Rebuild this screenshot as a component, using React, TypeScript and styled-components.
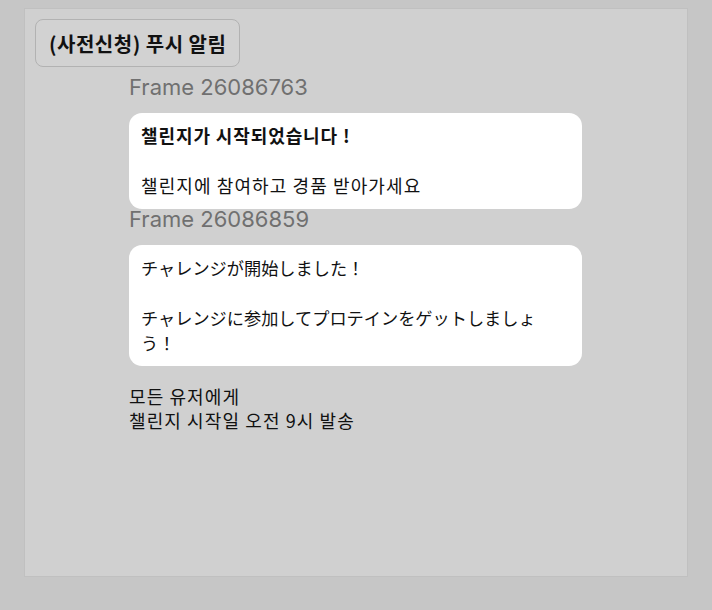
import styled, { createGlobalStyle } from "styled-components";

const GlobalStyle = createGlobalStyle`
  html, body {
    margin: 0;
    padding: 0;
    background: #c6c6c6;
  }
  body {
    padding: 8px 0 0;
    font-family: "Noto Sans CJK KR", "Noto Sans", sans-serif;
    color: #111;
  }
`;

const Panel = styled.div`
  box-sizing: border-box;
  width: 664px;
  height: 569px;
  margin: 0 auto;
  padding: 10px;
  background: #d0d0d0;
  border: 1px solid #c0c0c0;
  display: flex;
  flex-direction: column;
  align-items: flex-start;
`;

const PushButton = styled.button`
  box-sizing: border-box;
  height: 48px;
  padding: 0 13px;
  border: 1px solid #b2b2b2;
  border-radius: 8px;
  background: #d2d2d2;
  font-family: "Noto Sans CJK KR", sans-serif;
  font-size: 20px;
  font-weight: 700;
  color: #111;
  letter-spacing: 0.5px;
`;

const Frames = styled.div`
  display: flex;
  flex-direction: column;
  margin: 8px 0 0 94px;
`;

const FrameLabel = styled.div<{ $first?: boolean }>`
  font-family: Inter, "Liberation Sans", sans-serif;
  font-size: 22px;
  line-height: 24px;
  color: #707070;
  margin: ${(p) => (p.$first ? "0" : "-2px")} 0 14px;
`;

const Bubble = styled.div<{ $lang: "ko" | "ja" }>`
  box-sizing: border-box;
  width: 453px;
  padding: 10px 14px 11px 12px;
  background: #fff;
  border-radius: 13px;
  font-family: ${(p) =>
    p.$lang === "ja"
      ? `"Noto Sans CJK JP", sans-serif`
      : `"Noto Sans CJK KR", sans-serif`};
  font-size: ${(p) => (p.$lang === "ja" ? "17.2px" : "18px")};
  letter-spacing: ${(p) => (p.$lang === "ja" ? "0" : "1.1px")};
  line-height: 25px;
  color: #111;
`;

const BubbleTitle = styled.div<{ $bold?: boolean }>`
  font-weight: ${(p) => (p.$bold ? 700 : 400)};
  letter-spacing: ${(p) => (p.$bold ? "0.9px" : "inherit")};
  margin-bottom: 25px;
`;

const BubbleBody = styled.div``;

const Note = styled.div`
  margin-top: 18px;
  font-size: 18px;
  letter-spacing: 1.1px;
  line-height: 24px;
  color: #111;
`;

const frames = [
  {
    label: "Frame 26086763",
    lang: "ko" as const,
    bold: true,
    title: "챌린지가 시작되었습니다 !",
    body: "챌린지에 참여하고 경품 받아가세요",
  },
  {
    label: "Frame 26086859",
    lang: "ja" as const,
    bold: false,
    title: "チャレンジが開始しました！",
    body: "チャレンジに参加してプロテインをゲットしましょう！",
  },
];

export default function App() {
  return (
    <>
      <GlobalStyle />
      <Panel>
        <PushButton>(사전신청) 푸시 알림</PushButton>
        <Frames>
          {frames.map((f, i) => (
            <div key={f.label}>
              <FrameLabel $first={i === 0}>{f.label}</FrameLabel>
              <Bubble $lang={f.lang}>
                <BubbleTitle $bold={f.bold}>{f.title}</BubbleTitle>
                <BubbleBody>{f.body}</BubbleBody>
              </Bubble>
            </div>
          ))}
          <Note>
            모든 유저에게
            <br />
            챌린지 시작일 오전 9시 발송
          </Note>
        </Frames>
      </Panel>
    </>
  );
}
